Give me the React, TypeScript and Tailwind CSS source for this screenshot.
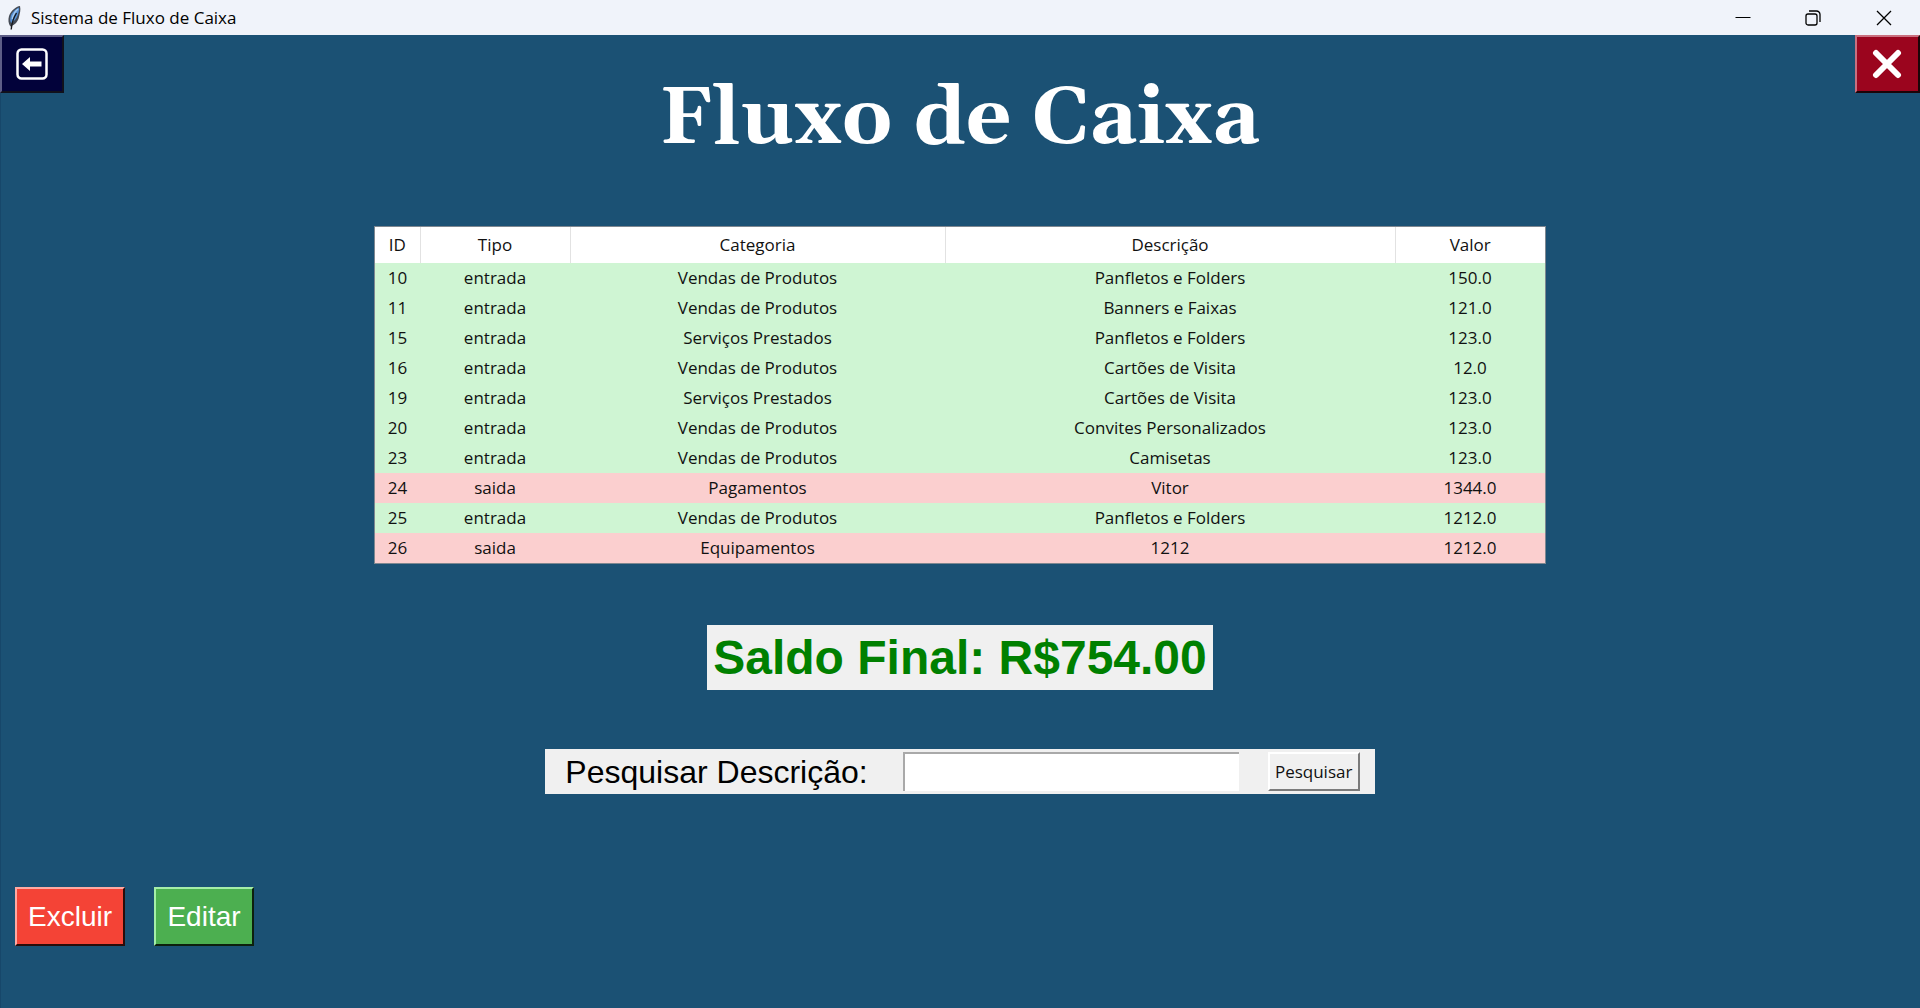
import React from "react";

type Entry = {
  id: number;
  tipo: "entrada" | "saida";
  categoria: string;
  descricao: string;
  valor: string;
};

const entries: Entry[] = [
  { id: 10, tipo: "entrada", categoria: "Vendas de Produtos", descricao: "Panfletos e Folders", valor: "150.0" },
  { id: 11, tipo: "entrada", categoria: "Vendas de Produtos", descricao: "Banners e Faixas", valor: "121.0" },
  { id: 15, tipo: "entrada", categoria: "Serviços Prestados", descricao: "Panfletos e Folders", valor: "123.0" },
  { id: 16, tipo: "entrada", categoria: "Vendas de Produtos", descricao: "Cartões de Visita", valor: "12.0" },
  { id: 19, tipo: "entrada", categoria: "Serviços Prestados", descricao: "Cartões de Visita", valor: "123.0" },
  { id: 20, tipo: "entrada", categoria: "Vendas de Produtos", descricao: "Convites Personalizados", valor: "123.0" },
  { id: 23, tipo: "entrada", categoria: "Vendas de Produtos", descricao: "Camisetas", valor: "123.0" },
  { id: 24, tipo: "saida", categoria: "Pagamentos", descricao: "Vitor", valor: "1344.0" },
  { id: 25, tipo: "entrada", categoria: "Vendas de Produtos", descricao: "Panfletos e Folders", valor: "1212.0" },
  { id: 26, tipo: "saida", categoria: "Equipamentos", descricao: "1212", valor: "1212.0" },
];

function TitleBar() {
  return (
    <header className="flex h-[35px] items-center bg-[#f0f3fa] text-black">
      <svg className="ml-[6px] h-[26px] w-[18px]" viewBox="0 0 18 26" aria-hidden="true">
        <path d="M14 1C10 1.500 5 5.500 3 11c-1 4-.8 7 1.300 10.500C9 20 12 16.500 13 12c.8-3.500 2-7 1-11z" fill="#454b55" />
        <path d="M13 2.500C9.500 4 5.500 7.500 4.500 12c-.6 3-.3 4.500.6 6C8.500 16 11 13 11.800 10c.8-3 1.700-5 1.200-7.500z" fill="#5590d6" />
        <path d="M12 4C9 6.500 7 10 6.300 14" stroke="#a5caf0" strokeWidth="1.500" fill="none" />
        <path d="M10.500 8C8 12 5.800 18 5.200 24.500" stroke="#17191d" strokeWidth="1.400" fill="none" />
      </svg>
      <span className="ml-[7px] text-[17px] leading-6">Sistema de Fluxo de Caixa</span>
      <div className="ml-auto flex h-full">
        <button aria-label="Minimizar" className="flex w-[70px] items-center justify-center">
          <svg width="16" height="16" viewBox="0 0 16 16" aria-hidden="true">
            <path d="M.5 7.500h15" stroke="#000" />
          </svg>
        </button>
        <button aria-label="Restaurar" className="flex w-[70px] items-center justify-center">
          <svg width="16" height="16" viewBox="0 0 16 16" fill="none" stroke="#000" strokeWidth="1.300" aria-hidden="true">
            <rect x="1" y="4" width="11" height="11" rx="2" />
            <path d="M4 1h7.500A3.500 3.500 0 0 1 15 4.500V12" />
          </svg>
        </button>
        <button aria-label="Fechar janela" className="flex w-[72px] items-center justify-center">
          <svg width="16" height="16" viewBox="0 0 16 16" fill="none" stroke="#000" strokeWidth="1.300" aria-hidden="true">
            <path d="M1 1l14 14M15 1L1 15" />
          </svg>
        </button>
      </div>
    </header>
  );
}

export default function App() {
  return (
    <div className="flex min-h-screen flex-col bg-[#1b5174] font-['Open_Sans','Noto_Sans',sans-serif]">
      <TitleBar />
      <main className="flex flex-1 flex-col border-x border-l-[#17476a] border-r-[#1b5174]">
        <div className="-mx-px flex items-start justify-between">
          <button
            aria-label="Voltar"
            className="flex h-[58px] w-[64px] items-center justify-center border-2 border-t-[#5d5d86] border-r-[#11111c] border-b-[#11111c] border-l-[#5d5d86] bg-[#02023a]"
          >
            <svg width="32" height="32" viewBox="0 0 32 32" aria-hidden="true">
              <rect x="1.500" y="1.500" width="29" height="29" rx="4" fill="none" stroke="#fff" strokeWidth="2.500" />
              <path d="M6 16l8-7v4.500h11.500v5H14V23z" fill="#fff" />
            </svg>
          </button>
          <h1 className="mt-[33px] font-[Georgia,Gelasio,'Liberation_Serif',serif] text-[80px] leading-[104px] font-bold text-white">
            Fluxo de Caixa
          </h1>
          <button
            aria-label="Sair"
            className="flex h-[58px] w-[65px] items-center justify-center border-2 border-t-[#c9707f] border-r-[#1c0508] border-b-[#1c0508] border-l-[#c9707f] bg-[#9b051e]"
          >
            <svg width="30" height="30" viewBox="0 0 30 30" aria-hidden="true">
              <path d="M4 4l22 22M26 4L4 26" stroke="#fff" strokeWidth="6" strokeLinecap="round" />
            </svg>
          </button>
        </div>

        <div className="mx-auto mt-[54px] w-[1172px] max-w-full border border-[#7e8790]">
          <table className="w-full table-fixed border-collapse text-center text-[17px] leading-[30px] text-[#111]">
            <colgroup>
              <col className="w-[45px]" />
              <col className="w-[150px]" />
              <col className="w-[375px]" />
              <col className="w-[450px]" />
              <col className="w-[150px]" />
            </colgroup>
            <thead>
              <tr className="h-[36px] bg-white">
                {["ID", "Tipo", "Categoria", "Descrição", "Valor"].map((h) => (
                  <th key={h} scope="col" className="border-r border-[#e2e2e2] p-0 font-normal last:border-r-0">
                    {h}
                  </th>
                ))}
              </tr>
            </thead>
            <tbody>
              {entries.map((e) => (
                <tr key={e.id} className={e.tipo === "entrada" ? "h-[30px] bg-[#cff5d3]" : "h-[30px] bg-[#fbcfcf]"}>
                  <td className="p-0">{e.id}</td>
                  <td className="p-0">{e.tipo}</td>
                  <td className="p-0">{e.categoria}</td>
                  <td className="p-0">{e.descricao}</td>
                  <td className="p-0">{e.valor}</td>
                </tr>
              ))}
            </tbody>
          </table>
        </div>

        <p className="mx-auto mt-[61px] bg-[#f0f0f0] px-[6px] font-['Liberation_Sans',sans-serif] text-[48px] leading-[65px] font-bold text-[#008000]">
          Saldo Final: R$754.00
        </p>

        <form
          className="mx-auto mt-[59px] flex h-[45px] items-center bg-[#f0f0f0] pr-[15px] pl-[20px]"
          onSubmit={(e) => e.preventDefault()}
        >
          <label htmlFor="busca" className="font-['Liberation_Sans',sans-serif] text-[32px] leading-[40px] text-black">
            Pesquisar Descrição:
          </label>
          <input
            id="busca"
            type="text"
            className="ml-[35px] h-[39px] w-[336px] border-t-2 border-l-2 border-[#a9a9a9] bg-white px-1 text-[17px] outline-none"
          />
          <button
            type="submit"
            className="ml-[29px] h-[39px] w-[92px] border-2 border-t-white border-r-[#7b7b7b] border-b-[#7b7b7b] border-l-white bg-[#f0f0f0] text-[17px] leading-6 text-[#111]"
          >
            Pesquisar
          </button>
        </form>

        <div className="mt-[93px] mb-[60px] ml-[14px] flex gap-[29px] font-['Liberation_Sans',sans-serif] text-[28px] leading-[55px] text-white">
          <button className="w-[110px] border-2 border-t-[#ffa9a2] border-r-[#2a0c0a] border-b-[#2a0c0a] border-l-[#ffa9a2] bg-[#f44336]">
            Excluir
          </button>
          <button className="w-[100px] border-2 border-t-[#a5eea8] border-r-[#0d200e] border-b-[#0d200e] border-l-[#a5eea8] bg-[#4caf50]">
            Editar
          </button>
        </div>
      </main>
    </div>
  );
}
